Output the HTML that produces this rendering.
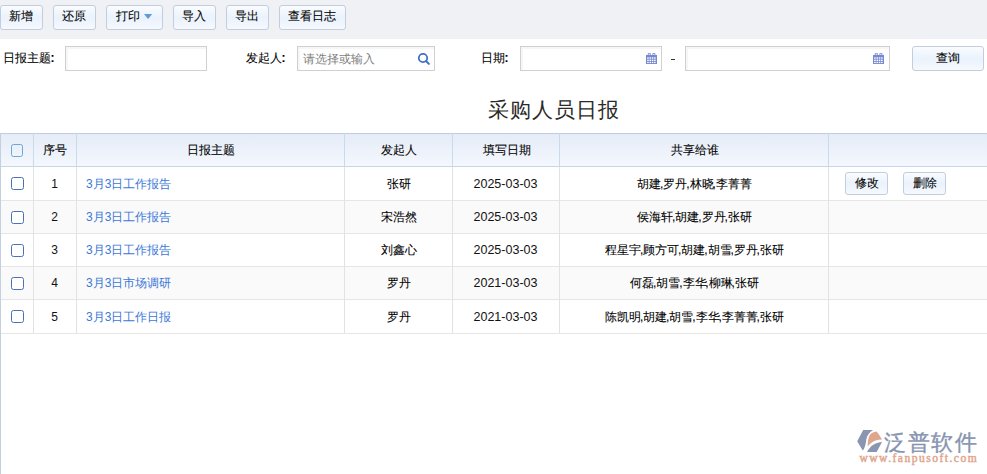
<!DOCTYPE html>
<html><head><meta charset="utf-8">
<style>
*{box-sizing:border-box;margin:0;padding:0}
html,body{width:987px;height:474px;overflow:hidden;background:#fff}
body{position:relative;font-family:"Liberation Sans",sans-serif;font-size:12px;color:#000}
.abs{position:absolute}
.cm{margin-left:-1.2px;letter-spacing:0px}
.co{font-weight:bold;margin-left:-0.5px}
.t{-webkit-text-stroke:0.08px currentColor}
#tb{left:0;top:0;width:987px;height:39px;background:#f0f1f4}
.btn{position:absolute;height:25px;border:1px solid #c2cddd;border-radius:3px;
 background:linear-gradient(#fafcff 0%,#eaf2fc 50%,#f6f9fe 100%)}
.lbl{position:absolute;white-space:nowrap;color:#000;line-height:16px}
.inp{position:absolute;top:46px;height:25px;border:1px solid #d0d0d0;background:#fff;box-shadow:inset 2px 2px 1px #f6f6f6}
.hdr{position:absolute;left:0;top:133px;width:987px;height:34px;border-top:1px solid #c0cde0;border-bottom:1px solid #c4d8ea;
 background:linear-gradient(#e5ecf8,#f4f7fd)}
.hv{position:absolute;top:133px;width:1px;height:34px;background:#c8dbec}
.bv{position:absolute;width:1px;background:#e2e2e2}
.row{position:absolute;left:0;width:987px;border-bottom:1px solid #e6e6e6}
.cell{position:absolute;white-space:nowrap;text-align:center;color:#000;line-height:16px}
.cb{position:absolute;width:13px;height:13px;border:1.4px solid #4a70b6;border-radius:2.5px;background:#fff}
.link{color:#3c78d8}
</style></head><body>
<div id="tb" class="abs"></div>
<div class="btn" style="left:0px;top:5px;width:43px;height:25px"></div>
<div class="lbl t" style="left:-0.5px;top:8px;width:43px;text-align:center">新增</div>
<div class="btn" style="left:53px;top:5px;width:43px;height:25px"></div>
<div class="lbl t" style="left:52.5px;top:8px;width:43px;text-align:center">还原</div>
<div class="btn" style="left:173px;top:5px;width:43px;height:25px"></div>
<div class="lbl t" style="left:172.5px;top:8px;width:43px;text-align:center">导入</div>
<div class="btn" style="left:226px;top:5px;width:43px;height:25px"></div>
<div class="lbl t" style="left:225.5px;top:8px;width:43px;text-align:center">导出</div>
<div class="btn" style="left:279px;top:5px;width:67px;height:25px"></div>
<div class="lbl t" style="left:278.5px;top:8px;width:67px;text-align:center">查看日志</div>
<div class="btn" style="left:106px;top:5px;width:57px;height:25px"></div>
<div class="lbl t" style="left:116px;top:8px">打印</div>
<svg class="abs" style="left:144px;top:14px" width="9" height="6" viewBox="0 0 9 6"><path d="M0 0H8.2L4.1 5Z" fill="#5d9cd8"/></svg>
<div class="lbl t" style="left:3px;top:50px">日报主题<span class="co">:</span></div>
<div class="inp" style="left:65px;width:142px"></div>
<div class="lbl t" style="left:246px;top:50px">发起人<span class="co">:</span></div>
<div class="inp" style="left:297px;width:138px"></div>
<div class="lbl" style="left:303px;top:51px;color:#7f7f7f">请选择或输入</div>
<svg class="abs" style="left:416px;top:51px" width="16" height="16" viewBox="0 0 16 16"><circle cx="7" cy="7" r="4.2" fill="none" stroke="#3f70c4" stroke-width="1.8"/><path d="M10 10L12.9 12.9" stroke="#3f70c4" stroke-width="2" stroke-linecap="round"/></svg>
<div class="lbl t" style="left:481px;top:50px">日期<span class="co">:</span></div>
<div class="inp" style="left:520px;width:142px"></div>
<svg class="abs" style="left:646px;top:53px" width="11" height="11" viewBox="0 0 11 11"><rect x="0" y="2" width="11" height="9" fill="#7788d2"/><path d="M2.3 0.3h2v2.5h-2zM6.9 0.3h2v2.5h-2z" fill="none" stroke="#7788d2" stroke-width="0.9"/><g fill="#ffffff"><rect x="1.2" y="4.3" width="1.5" height="1.4"/><rect x="3.5" y="4.3" width="1.5" height="1.4"/><rect x="5.8" y="4.3" width="1.5" height="1.4"/><rect x="8.1" y="4.3" width="1.5" height="1.4"/><rect x="1.2" y="6.6" width="1.5" height="1.4"/><rect x="3.5" y="6.6" width="1.5" height="1.4"/><rect x="5.8" y="6.6" width="1.5" height="1.4"/><rect x="8.1" y="6.6" width="1.5" height="1.4"/><rect x="1.2" y="8.8" width="1.5" height="1.3"/><rect x="3.5" y="8.8" width="1.5" height="1.3"/><rect x="5.8" y="8.8" width="1.5" height="1.3"/><rect x="8.1" y="8.8" width="1.5" height="1.3"/></g></svg>
<div class="abs" style="left:671px;top:59px;width:4px;height:1px;background:#333"></div>
<div class="inp" style="left:685px;width:205px"></div>
<svg class="abs" style="left:873px;top:53px" width="11" height="11" viewBox="0 0 11 11"><rect x="0" y="2" width="11" height="9" fill="#7788d2"/><path d="M2.3 0.3h2v2.5h-2zM6.9 0.3h2v2.5h-2z" fill="none" stroke="#7788d2" stroke-width="0.9"/><g fill="#ffffff"><rect x="1.2" y="4.3" width="1.5" height="1.4"/><rect x="3.5" y="4.3" width="1.5" height="1.4"/><rect x="5.8" y="4.3" width="1.5" height="1.4"/><rect x="8.1" y="4.3" width="1.5" height="1.4"/><rect x="1.2" y="6.6" width="1.5" height="1.4"/><rect x="3.5" y="6.6" width="1.5" height="1.4"/><rect x="5.8" y="6.6" width="1.5" height="1.4"/><rect x="8.1" y="6.6" width="1.5" height="1.4"/><rect x="1.2" y="8.8" width="1.5" height="1.3"/><rect x="3.5" y="8.8" width="1.5" height="1.3"/><rect x="5.8" y="8.8" width="1.5" height="1.3"/><rect x="8.1" y="8.8" width="1.5" height="1.3"/></g></svg>
<div class="btn" style="left:912px;top:46px;width:72px;height:25px"></div>
<div class="lbl t" style="left:912px;top:50px;width:72px;text-align:center">查询</div>
<div class="lbl" style="left:488px;top:95.5px;font-size:21px;line-height:28px;color:#2a2a2a"><span style="letter-spacing:1px">采购人员日报</span></div>
<div class="hdr"></div>
<div class="hv" style="left:33px"></div>
<div class="hv" style="left:76px"></div>
<div class="hv" style="left:344px"></div>
<div class="hv" style="left:452px"></div>
<div class="hv" style="left:559px"></div>
<div class="hv" style="left:828px"></div>
<div class="cb" style="left:11px;top:144px;width:12px;height:13px;border-color:#6fa5d8;background:transparent"></div>
<div class="cell t" style="left:33px;width:43px;top:142px">序号</div>
<div class="cell t" style="left:77px;width:268px;top:142px">日报主题</div>
<div class="cell t" style="left:345px;width:108px;top:142px">发起人</div>
<div class="cell t" style="left:453px;width:107px;top:142px">填写日期</div>
<div class="cell t" style="left:560px;width:269px;top:142px">共享给谁</div>
<div class="row" style="top:167px;height:34px;background:#fff"></div>
<div class="row" style="top:201px;height:33px;background:#fafafa"></div>
<div class="row" style="top:234px;height:33px;background:#fff"></div>
<div class="row" style="top:267px;height:33px;background:#fafafa"></div>
<div class="row" style="top:300px;height:34px;background:#fff"></div>
<div class="bv" style="left:33px;top:167px;height:166px"></div>
<div class="bv" style="left:76px;top:167px;height:166px"></div>
<div class="bv" style="left:344px;top:167px;height:166px"></div>
<div class="bv" style="left:452px;top:167px;height:166px"></div>
<div class="bv" style="left:559px;top:167px;height:166px"></div>
<div class="bv" style="left:828px;top:167px;height:166px"></div>
<div class="cb" style="left:11px;top:177px"></div>
<div class="cell" style="left:33px;width:43px;top:175.5px;color:#111">1</div>
<div class="cell link" style="left:86px;top:175.5px;text-align:left">3月3日工作报告</div>
<div class="cell t" style="left:345px;width:108px;top:175.5px">张研</div>
<div class="cell" style="left:452px;width:107px;top:175.5px;font-size:12.5px;color:#111">2025-03-03</div>
<div class="cell t" style="left:560px;width:269px;top:175.5px">胡建<span class="cm">,</span>罗丹<span class="cm">,</span>林晓<span class="cm">,</span>李菁菁</div>
<div class="btn" style="left:845px;top:172px;width:43px;height:23px"></div>
<div class="lbl t" style="left:845px;top:175px;width:43px;text-align:center">修改</div>
<div class="btn" style="left:903px;top:172px;width:43px;height:23px"></div>
<div class="lbl t" style="left:903px;top:175px;width:43px;text-align:center">删除</div>
<div class="cb" style="left:11px;top:211px"></div>
<div class="cell" style="left:33px;width:43px;top:209.0px;color:#111">2</div>
<div class="cell link" style="left:86px;top:209.0px;text-align:left">3月3日工作报告</div>
<div class="cell t" style="left:345px;width:108px;top:209.0px">宋浩然</div>
<div class="cell" style="left:452px;width:107px;top:209.0px;font-size:12.5px;color:#111">2025-03-03</div>
<div class="cell t" style="left:560px;width:269px;top:209.0px">侯海轩<span class="cm">,</span>胡建<span class="cm">,</span>罗丹<span class="cm">,</span>张研</div>
<div class="cb" style="left:11px;top:244px"></div>
<div class="cell" style="left:33px;width:43px;top:242.0px;color:#111">3</div>
<div class="cell link" style="left:86px;top:242.0px;text-align:left">3月3日工作报告</div>
<div class="cell t" style="left:345px;width:108px;top:242.0px">刘鑫心</div>
<div class="cell" style="left:452px;width:107px;top:242.0px;font-size:12.5px;color:#111">2025-03-03</div>
<div class="cell t" style="left:560px;width:269px;top:242.0px">程星宇<span class="cm">,</span>顾方可<span class="cm">,</span>胡建<span class="cm">,</span>胡雪<span class="cm">,</span>罗丹<span class="cm">,</span>张研</div>
<div class="cb" style="left:11px;top:277px"></div>
<div class="cell" style="left:33px;width:43px;top:275.0px;color:#111">4</div>
<div class="cell link" style="left:86px;top:275.0px;text-align:left">3月3日市场调研</div>
<div class="cell t" style="left:345px;width:108px;top:275.0px">罗丹</div>
<div class="cell" style="left:452px;width:107px;top:275.0px;font-size:12.5px;color:#111">2021-03-03</div>
<div class="cell t" style="left:560px;width:269px;top:275.0px">何磊<span class="cm">,</span>胡雪<span class="cm">,</span>李华<span class="cm">,</span>柳琳<span class="cm">,</span>张研</div>
<div class="cb" style="left:11px;top:310px"></div>
<div class="cell" style="left:33px;width:43px;top:308.5px;color:#111">5</div>
<div class="cell link" style="left:86px;top:308.5px;text-align:left">3月3日工作日报</div>
<div class="cell t" style="left:345px;width:108px;top:308.5px">罗丹</div>
<div class="cell" style="left:452px;width:107px;top:308.5px;font-size:12.5px;color:#111">2021-03-03</div>
<div class="cell t" style="left:560px;width:269px;top:308.5px">陈凯明<span class="cm">,</span>胡建<span class="cm">,</span>胡雪<span class="cm">,</span>李华<span class="cm">,</span>李菁菁<span class="cm">,</span>张研</div>
<div class="abs" style="left:0;top:133px;width:1px;height:341px;background:#c4d0e0"></div>
<svg class="abs" style="left:852px;top:426px" width="36" height="30" viewBox="0 0 36 30">
<path d="M11.2 4.1H21.1C17.5 6.2 15 9.5 14.3 13.5C13.9 16.5 13.7 19.5 11.8 23.2L10.7 24.5L5.2 15.2Z" fill="#8995b1"/>
<path d="M15.6 20.6C15.9 17 15.9 12 17.8 9.1C19 7.2 21.5 5.6 24.4 5.4C26.5 7.8 28.6 10.5 30 13.6C25.5 13.6 21.5 15.3 19.5 16.8C17.8 18 16.5 19.3 15.6 20.6Z" fill="#e0a68c"/>
<path d="M15.1 26.1C16.2 23.8 17.2 22.3 18.4 21.2C20.5 19 24 16.5 30 16.1L24.7 26.1Z" fill="#8995b1"/>
</svg>
<div class="abs" style="left:884px;top:427.5px;font-size:22px;line-height:30px;color:#8794b0;white-space:nowrap;letter-spacing:1.6px;-webkit-text-stroke:0.35px #8794b0">泛普软件</div>
<div class="abs" style="left:859.5px;top:450.5px;font-family:'Liberation Serif',serif;font-size:11.5px;line-height:14px;color:#e0a68c;white-space:nowrap;letter-spacing:1.5px;-webkit-text-stroke:0.45px #e0a68c">www.fanpusoft.com</div>
</body></html>
